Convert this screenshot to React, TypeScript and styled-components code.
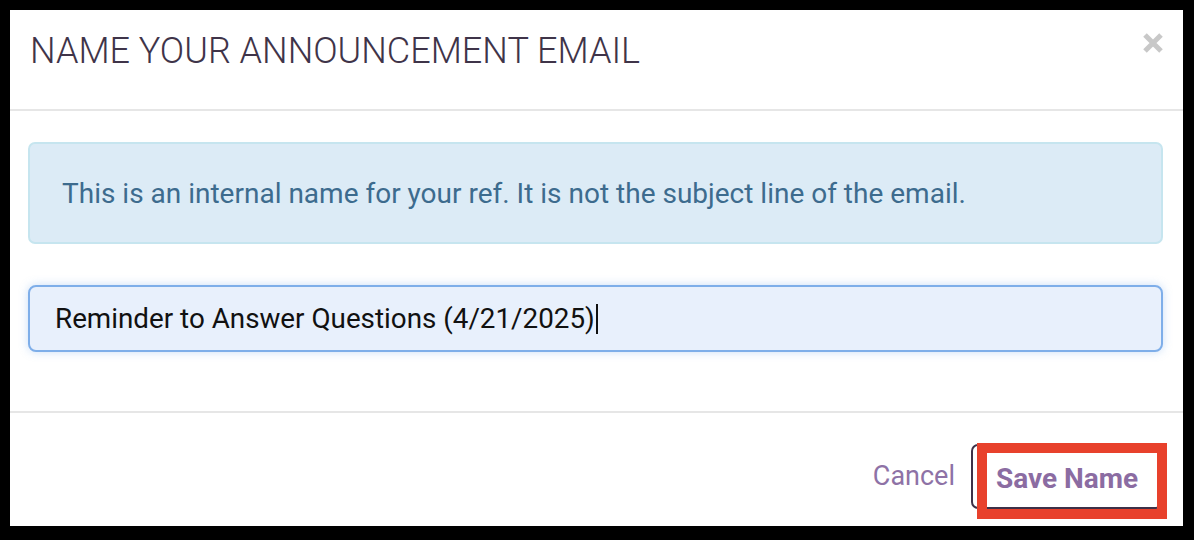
import React from 'react'
import { createGlobalStyle, styled } from 'styled-components'

const GlobalStyle = createGlobalStyle`
  html, body {
    margin: 0;
    padding: 0;
    background: #000;
  }
  * {
    box-sizing: border-box;
  }
`

const Frame = styled.div`
  width: 1194px;
  height: 540px;
  background: #000;
  padding: 10px 11px 14px 10px;
`

const Modal = styled.div`
  height: 100%;
  background: #fff;
  display: flex;
  flex-direction: column;
  font-family: Roboto, "Liberation Sans", sans-serif;
`

const Header = styled.div`
  height: 101px;
  padding: 19px 20px 0 20px;
  display: flex;
  justify-content: space-between;
  align-items: flex-start;
  border-bottom: 2px solid #e6e6e6;
`

const Title = styled.h4`
  margin: 0;
  font-size: 36px;
  line-height: 44px;
  font-weight: 300;
  color: #3f3449;
`

const CloseButton = styled.button`
  margin-top: 4px;
  padding: 0;
  border: 0;
  background: none;
  width: 20px;
  height: 20px;
  display: flex;
  cursor: pointer;
  color: #c8c8c8;
`

const Body = styled.div`
  height: 302px;
  padding: 31px 20px 0 18px;
  display: flex;
  flex-direction: column;
  gap: 41px;
  border-bottom: 2px solid #e6e6e6;
`

const Alert = styled.div`
  height: 102px;
  padding: 0 32px;
  display: flex;
  align-items: center;
  background: #dcebf6;
  border: 2px solid #c6e5ef;
  border-radius: 7px;
  color: #3d6b8e;
  font-size: 28px;
`

const InputField = styled.div`
  height: 67px;
  padding: 0 25px;
  display: flex;
  align-items: center;
  background: #e8f0fc;
  border: 2px solid #7eaee9;
  border-radius: 8px;
  box-shadow: 0 0 10px rgba(102, 160, 233, 0.35);
  color: #111;
  font-size: 27.8px;
`

const Caret = styled.span`
  display: inline-block;
  width: 2px;
  height: 30px;
  margin-left: 1px;
  background: #111;
`

const Footer = styled.div`
  flex: 1;
  padding: 31px 20px 0 0;
  display: flex;
  justify-content: flex-end;
  align-items: flex-start;
  gap: 16px;
`

const TextButton = styled.button`
  margin-top: 16px;
  padding: 0;
  border: 0;
  background: none;
  font-family: inherit;
  font-size: 27px;
  color: #8e72a6;
  cursor: pointer;
`

const SaveWrap = styled.div`
  position: relative;
`

const SaveButton = styled.button`
  height: 65px;
  width: 192px;
  padding: 4px 0 0;
  background: #fff;
  border: 2px solid #3d3148;
  border-radius: 7px;
  font-family: inherit;
  font-size: 28px;
  font-weight: 700;
  color: #8b6ca2;
  cursor: pointer;
`

const Highlight = styled.div`
  position: absolute;
  left: 6px;
  top: -1px;
  right: -4px;
  bottom: -10px;
  border: 10px solid #e8412c;
  pointer-events: none;
`

export default function App() {
  return (
    <>
      <GlobalStyle />
      <Frame>
        <Modal>
          <Header>
            <Title>NAME YOUR ANNOUNCEMENT EMAIL</Title>
            <CloseButton aria-label="Close">
              <svg width="20" height="20" viewBox="0 0 20 20">
                <path d="M2 2 L18 18 M18 2 L2 18" stroke="currentColor" strokeWidth="5" />
              </svg>
            </CloseButton>
          </Header>
          <Body>
            <Alert>This is an internal name for your ref. It is not the subject line of the email.</Alert>
            <InputField role="textbox">
              Reminder to Answer Questions (4/21/2025)
              <Caret />
            </InputField>
          </Body>
          <Footer>
            <TextButton>Cancel</TextButton>
            <SaveWrap>
              <SaveButton>Save Name</SaveButton>
              <Highlight />
            </SaveWrap>
          </Footer>
        </Modal>
      </Frame>
    </>
  )
}
